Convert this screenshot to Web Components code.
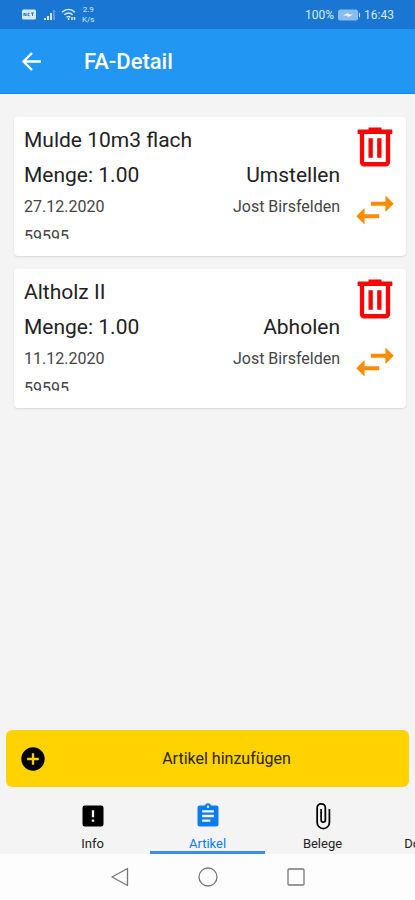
<!DOCTYPE html>
<html lang="de">
<head>
<meta charset="utf-8">
<meta name="viewport" content="width=device-width, initial-scale=1">
<title>FA-Detail</title>
<style>
    body {
        display: flex;
        flex-direction: column;
        min-height: 100vh;
        margin: 0;
        background: #f4f4f4;
        color: #222;
        font-family: Roboto, "Noto Sans", sans-serif;
    }

    main {
        flex: 1;
        display: flex;
        flex-direction: column;
        gap: 13px;
        padding: 23px 9px 13px 14px;
    }
</style>
</head>
<body>

<status-bar battery="100%" time="16:43"></status-bar>
<app-bar>FA-Detail</app-bar>

<main>
    <article-card>
        <span slot="name">Mulde 10m3 flach</span>
        <span slot="amount">Menge: 1.00</span>
        <span slot="action">Umstellen</span>
        <span slot="date">27.12.2020</span>
        <span slot="place">Jost Birsfelden</span>
        <span slot="number">59595</span>
    </article-card>
    <article-card>
        <span slot="name">Altholz II</span>
        <span slot="amount">Menge: 1.00</span>
        <span slot="action">Abholen</span>
        <span slot="date">11.12.2020</span>
        <span slot="place">Jost Birsfelden</span>
        <span slot="number">59595</span>
    </article-card>
</main>

<add-button>Artikel hinzufügen</add-button>

<tab-bar>
    <tab-item icon="info">Info</tab-item>
    <tab-item icon="list" active>Artikel</tab-item>
    <tab-item icon="clip">Belege</tab-item>
    <tab-item icon="doc">Dokumente</tab-item>
</tab-bar>

<system-nav></system-nav>

<script>
    // Attach an open shadow root with the given markup
    function shadow(el, html) {
        el.attachShadow({mode: 'open'}).innerHTML = html;
    }

    class StatusBar extends HTMLElement {
        constructor() {
            super();
            shadow(this, `
      <style>
        :host {
          display: flex;
          align-items: center;
          justify-content: space-between;
          height: 29px;
          padding: 0 21px;
          background: #1976d2;
          color: #d8ebfc;
          font-size: 12px;
        }
        div { display: flex; align-items: center; }
        .left { gap: 5px; }
        .right { gap: 3px; }
        .speed { font-size: 8px; line-height: 10px; text-align: center; }
        svg { display: block; }
      </style>
      <div class="left">
        <svg width="16" height="11" viewBox="0 0 16 11">
          <rect x="1" y="0.5" width="14" height="10" rx="1.5" fill="#d8ebfc"/>
          <path d="M3 7V4l2 3V4M8.500 4.300H7v2.400h1.500M10 4h3M11.500 4v3" fill="none" stroke="#1976d2"/>
        </svg>
        <svg width="14" height="12" viewBox="0 0 14 12" fill="#d8ebfc">
          <path d="M2 9h2v2H2zM5 7h2v4H5zM8 4h2v7H8z"/>
          <path d="M11 1h2v10h-2z" opacity=".35"/>
        </svg>
        <svg width="16" height="13" viewBox="0 0 16 13" fill="none" stroke="#d8ebfc" stroke-width="1.500">
          <path d="M1 4.200c4-3.600 9-3.600 13 0M3.300 6.800c2.700-2.300 5.700-2.300 8.400 0M5.600 9.200c1.300-1 2.500-1 3.800 0"/>
          <path d="M7.500 10v2M11 12V9M13.500 9v3"/>
        </svg>
        <div class="speed"><span>2.9<br>K/s</span></div>
      </div>
      <div class="right">
        <span id="battery"></span>
        <svg width="24" height="12" viewBox="0 0 24 12">
          <rect x="1" y="0.500" width="20" height="11" rx="2.500" fill="#8cbcee"/>
          <path d="M22 3.500c1.500.5 1.500 4.500 0 5z" fill="#d8ebfc"/>
          <path d="M6 6.500l5-2.500.5 1.500H16l-5 2.500-.5-1.500z" fill="#fff"/>
        </svg>
        <span id="time"></span>
      </div>`);
        }

        connectedCallback() {
            this.shadowRoot.getElementById('battery').textContent = this.getAttribute('battery');
            this.shadowRoot.getElementById('time').textContent = this.getAttribute('time');
        }
    }

    class AppBar extends HTMLElement {
        constructor() {
            super();
            shadow(this, `
      <style>
        :host {
          display: flex;
          align-items: center;
          gap: 36px;
          height: 65px;
          box-sizing: border-box;
          padding: 2px 16px 0;
          background: #2196f3;
          border-bottom: 1px solid #1886de;
          color: #fff;
        }
        button { padding: 0; border: 0; background: none; color: inherit; }
        svg { display: block; }
        h1 { margin: 0; font-size: 22px; font-weight: 500; line-height: 28px; }
      </style>
      <button type="button" aria-label="Zurück">
        <svg width="32" height="28" viewBox="0 0 32 28" fill="none" stroke="currentColor" stroke-width="2.400">
          <path d="M25 13.500H8M16 5l-8.500 8.500L16 22"/>
        </svg>
      </button>
      <h1><slot></slot></h1>`);
        }
    }

    class ArticleCard extends HTMLElement {
        constructor() {
            super();
            shadow(this, `
      <style>
        :host {
          display: flex;
          gap: 9px;
          padding: 6px 5px 17px 10px;
          background: #fff;
          border-radius: 4px;
          box-shadow: 0 1px 2px rgba(0, 0, 0, .12);
        }
        .text { flex: 1; min-width: 0; }
        .row { display: flex; justify-content: space-between; }
        .big { font-size: 21px; line-height: 35px; }
        .small { font-size: 16px; line-height: 28px; color: #444; }
        /* the number row has less room than its line */
        .cut { height: 18px; line-height: 32px; overflow: hidden; }
        .actions { display: flex; flex-direction: column; align-items: center; gap: 12px; height: 112px; }
        button { padding: 0; border: 0; background: none; }
        svg { display: block; }
      </style>
      <div class="text">
        <div class="row big"><slot name="name"></slot></div>
        <div class="row big"><slot name="amount"></slot><slot name="action"></slot></div>
        <div class="row small"><slot name="date"></slot><slot name="place"></slot></div>
        <div class="row small cut"><slot name="number"></slot></div>
      </div>
      <div class="actions">
        <button type="button" aria-label="Löschen">
          <svg width="52" height="50" viewBox="0 0 24 23" fill="#f80606">
            <path d="M9 2v1H4v2h1v13a2 2 0 0 0 2 2h10a2 2 0 0 0 2-2V5h1V3h-5V2H9M7 5h10v13H7V5m2 2v9h2V7H9m4 0v9h2V7h-2z"/>
          </svg>
        </button>
        <button type="button" aria-label="Umbuchen">
          <svg width="50" height="50" viewBox="0 0 24 24" fill="#fb8c00">
            <path d="M6.990 11L3 15l3.990 4v-3H14v-2H6.990v-3zM21 9l-3.990-4v3H10v2h7.010v3L21 9z"/>
          </svg>
        </button>
      </div>`);
        }
    }

    class AddButton extends HTMLElement {
        constructor() {
            super();
            shadow(this, `
      <style>
        :host { display: block; padding: 0 6px; }
        button {
          display: flex;
          align-items: center;
          gap: 10px;
          width: 100%;
          height: 57px;
          padding: 0 13px;
          border: 0;
          border-radius: 6px;
          background: #ffd200;
          color: #2b2400;
          font: 16px Roboto, "Noto Sans", sans-serif;
        }
        svg { display: block; }
        span { flex: 1; text-align: center; }
      </style>
      <button type="button">
        <svg width="28" height="28" viewBox="0 0 24 24">
          <path d="M12 2a10 10 0 1 0 0 20 10 10 0 0 0 0-20zm5 11h-4v4h-2v-4H7v-2h4V7h2v4h4v2z" fill="#000"/>
        </svg>
        <span><slot></slot></span>
      </button>`);
        }
    }

    // Tabs keep their width, the row runs on past the right edge
    class TabBar extends HTMLElement {
        constructor() {
            super();
            shadow(this, `
      <style>
        :host {
          display: flex;
          height: 67px;
          padding-left: 35px;
          overflow: hidden;
          background: #f4f4f4;
        }
      </style>
      <slot></slot>`);
        }
    }

    const TAB_ICONS = {
        info: '<path fill="currentColor" d="M19 3H5a2 2 0 0 0-2 2v14a2 2 0 0 0 2 2h14a2 2 0 0 0 2-2V5a2 2 0 0 0-2-2zm-6 14h-2v-2h2v2zm0-4h-2V7h2v6z"/>',
        list: '<path fill="currentColor" d="M19 3h-4.180C14.400 1.840 13.300 1 12 1s-2.400.840-2.820 2H5a2 2 0 0 0-2 2v14a2 2 0 0 0 2 2h14a2 2 0 0 0 2-2V5a2 2 0 0 0-2-2zm-7 0a1 1 0 1 1 0 2 1 1 0 0 1 0-2zm2 14H7v-2h7v2zm3-4H7v-2h10v2zm0-4H7V7h10v2z"/>',
        clip: '<path fill="none" stroke="currentColor" stroke-width="1.500" d="M17.500 6v11.500a5 5 0 0 1-10.500 0V5a3.500 3.500 0 0 1 7 0v10.500a1.800 1.800 0 0 1-3.600 0V6"/>',
        doc: '<path fill="currentColor" d="M14 2H6a2 2 0 0 0-2 2v16a2 2 0 0 0 2 2h12a2 2 0 0 0 2-2V8l-6-6zm-1 7V3.500L18.500 9H13z"/>'
    };

    class TabItem extends HTMLElement {
        constructor() {
            super();
            shadow(this, `
      <style>
        :host { display: block; flex: 0 0 115px; color: #222; }
        :host([active]) { color: #0a7cf0; }
        a {
          display: flex;
          flex-direction: column;
          align-items: center;
          gap: 6px;
          box-sizing: border-box;
          height: 100%;
          padding-top: 15px;
          border-bottom: 3px solid transparent;
          color: inherit;
          font-size: 13px;
          line-height: 16px;
          text-decoration: none;
        }
        :host([active]) a { border-color: #3a8fe0; }
        svg { display: block; overflow: visible; color: #000; }
        :host([active]) svg { color: inherit; }
      </style>
      <a href="#">
        <svg width="28" height="28" viewBox="0 0 24 24">${TAB_ICONS[this.getAttribute('icon')]}</svg>
        <slot></slot>
      </a>`);
        }
    }

    class SystemNav extends HTMLElement {
        constructor() {
            super();
            shadow(this, `
      <style>
        :host {
          display: flex;
          align-items: center;
          justify-content: center;
          gap: 68px;
          height: 46px;
          background: #fdfdfd;
        }
        button { padding: 0; border: 0; background: none; }
        svg { display: block; fill: none; stroke: #777; stroke-width: 1.300; }
      </style>
      <button type="button" aria-label="Zurück"><svg width="20" height="20" viewBox="0 0 20 20"><path d="M17.500 1.500v17L2 10z" stroke-linejoin="round"/></svg></button>
      <button type="button" aria-label="Start"><svg width="20" height="20" viewBox="0 0 20 20"><circle cx="10" cy="10" r="9"/></svg></button>
      <button type="button" aria-label="Übersicht"><svg width="20" height="20" viewBox="0 0 20 20"><rect x="2" y="2" width="16" height="16" rx="1"/></svg></button>`);
        }
    }

    customElements.define('status-bar', StatusBar);
    customElements.define('app-bar', AppBar);
    customElements.define('article-card', ArticleCard);
    customElements.define('add-button', AddButton);
    customElements.define('tab-bar', TabBar);
    customElements.define('tab-item', TabItem);
    customElements.define('system-nav', SystemNav);
</script>
</body>
</html>
